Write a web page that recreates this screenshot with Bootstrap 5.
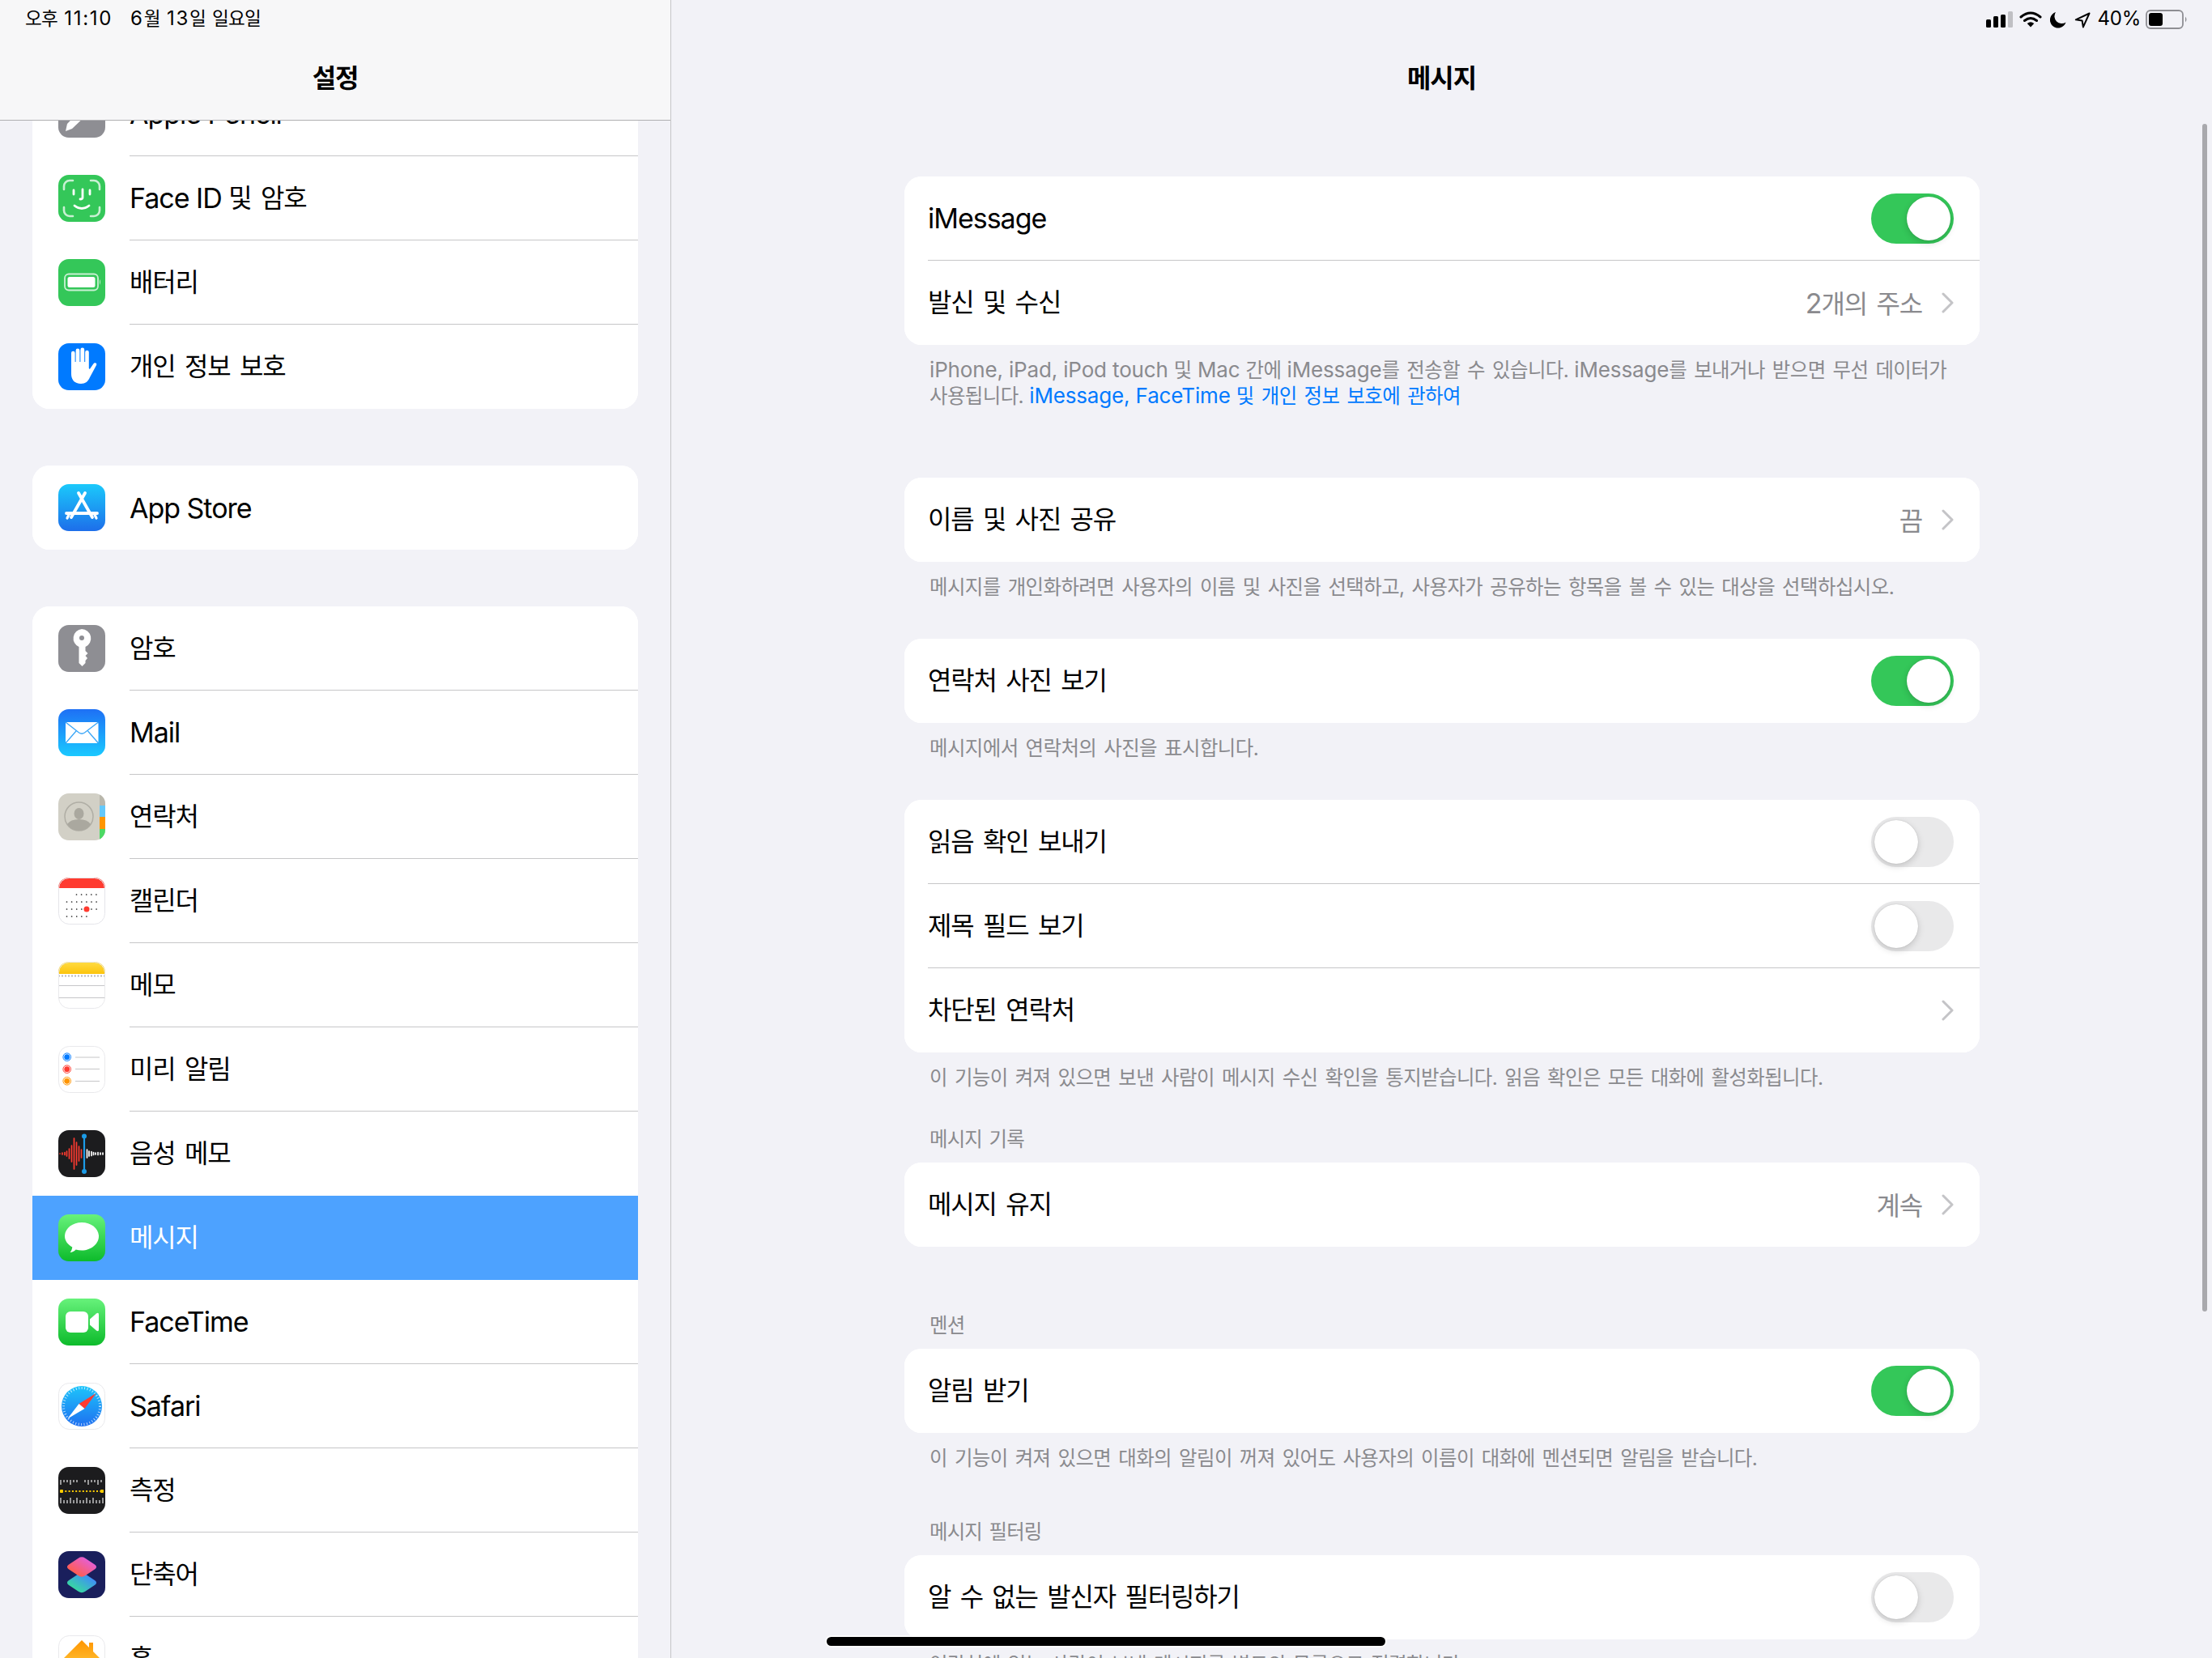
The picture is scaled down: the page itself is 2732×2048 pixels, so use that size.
<!DOCTYPE html>
<html lang="ko">
<head>
<meta charset="utf-8">
<title>설정 - 메시지</title>
<link href="https://cdn.jsdelivr.net/npm/bootstrap@5.3.0/dist/css/bootstrap.min.css" rel="stylesheet">
<style>
html,body{margin:0;height:2048px;overflow:hidden}
body{background:#f2f2f7;color:#000;font-family:Inter,"Noto Sans CJK KR",sans-serif;font-size:34px;position:relative;width:2732px;letter-spacing:-.03em}
.ko{font-size:.94em;letter-spacing:-.035em;word-spacing:.11em}
.shell{height:2048px}
.side{width:829px;flex:none;border-right:1px solid #c6c6c8;position:relative;overflow:hidden;padding:89px 40px 0 40px;height:2048px}
.side-head{position:absolute;left:0;right:0;top:0;height:149px;background:#f7f7f8;border-bottom:1px solid #b0b0b2;z-index:2}
.stat{height:46px;font-size:24px;padding-top:6px;line-height:34px;letter-spacing:0}
.stat-left{padding-left:31px;gap:22px;letter-spacing:.07em}
.nav-title{height:102px;font-weight:600;font-size:34px}
.set-group{border-radius:21px;background:#fff}
.set-item{border:0;padding:0;height:104px;background:#fff;color:#000;font-size:34px}
.set-gap{margin-top:70px}
.set-gap2{margin-top:70px}
.ico{width:58px;height:58px;margin:0 30px 0 32px;flex:none;display:block}
.lbl{border-bottom:1px solid #c6c6c8;height:104px;min-width:0}
.set-item:last-child .lbl,.no-line .lbl{border-bottom:0}
.set-item.sel{background:#4da2ff;color:#fff}
.pane{min-width:0;height:2048px;overflow:hidden}
.pane-body{width:1328px;margin:70px 0 0 288px}
.pane .set-item .lbl{margin-left:29px;padding-right:32px}
.val{color:#8a8a8e;margin-right:24px}
.chev{width:15px;height:26px;flex:none}
.tgl{width:102px;height:62px;border-radius:31px;background:#e9e9ea;position:relative;flex:none;display:block}
.tgl::after{content:"";position:absolute;top:4px;left:4px;width:54px;height:54px;border-radius:50%;background:#fff;box-shadow:0 3px 8px rgba(0,0,0,.16),0 0 1px rgba(0,0,0,.25)}
.tgl.on{background:#34c759}
.tgl.on::after{left:44px}
.cap{color:#8a8a8e;font-size:26px;line-height:32px;padding:0 30px 0 31px;margin-top:15px;letter-spacing:-.006em;word-break:keep-all}
.cap .ko{letter-spacing:-.023em}
.cap a{color:#007aff;text-decoration:none}
.sec-a{margin-top:85px}
.sec-b{margin-top:48px}
.hd{color:#8a8a8e;font-size:26px;line-height:32px;padding-left:31px;margin-bottom:13px}
.hd-a{margin-top:44px}
.hd-b{margin-top:81px}
.hd-c{margin-top:59px}
.stat-right{padding-right:28px}
.stat-svg{display:block;flex:none}
.s-sig{margin:8px 0 0}
.s-wifi{margin:8px 0 0 7px}
.s-moon{margin:9px 0 0 10px}
.s-arrow{margin:9px 0 0 10px}
.s-pct{margin-left:9px;letter-spacing:-.01em}
.s-batt{margin:6px 0 0 6px}
.sbar{position:absolute;left:2720px;top:153px;width:6px;height:1467px;border-radius:3px;background:#a9a9ad;z-index:3}
.hbar{position:absolute;left:1021px;top:2022px;width:690px;height:11px;border-radius:6px;background:#000;z-index:4;box-shadow:0 0 0 2px rgba(255,255,255,.75)}
</style>
</head>
<body>
<div class="d-flex shell">
  <aside class="side">
    <header class="side-head">
      <div class="stat stat-left d-flex"><span><span class="ko">오후</span> 11:10</span><span>6<span class="ko">월</span> 13<span class="ko">일 일요일</span></span></div>
      <div class="nav-title d-flex align-items-center justify-content-center"><span class="ko">설정</span></div>
    </header>

    <ul class="list-group set-group">
      <li class="list-group-item set-item d-flex align-items-center">
        <svg class="ico" viewBox="0 0 58 58"><rect width="58" height="58" rx="13" fill="#8e8e93"/><path d="M9 50l2-9 20-21 7 7-21 20z" fill="#fff"/></svg>
        <span class="lbl flex-grow-1 d-flex align-items-center">Apple Pencil</span>
      </li>
      <li class="list-group-item set-item d-flex align-items-center">
        <svg class="ico" viewBox="0 0 58 58"><rect width="58" height="58" rx="13" fill="#34c759"/><g fill="none" stroke="#c9f0d3" stroke-width="2.6" stroke-linecap="round"><path d="M7 18v-4a7 7 0 0 1 7-7h4M40 7h4a7 7 0 0 1 7 7v4M51 40v4a7 7 0 0 1-7 7h-4M18 51h-4a7 7 0 0 1-7-7v-4"/></g><g fill="none" stroke="#fff" stroke-width="2.8" stroke-linecap="round"><path d="M19 19v5M39 19v5M30 18v10q0 2-3 2M20 38q9 7 18 0"/></g></svg>
        <span class="lbl flex-grow-1 d-flex align-items-center">Face ID&nbsp;<span class="ko">및 암호</span></span>
      </li>
      <li class="list-group-item set-item d-flex align-items-center">
        <svg class="ico" viewBox="0 0 58 58"><rect width="58" height="58" rx="13" fill="#34c759"/><rect x="8" y="18.5" width="41" height="20" rx="5" fill="none" stroke="#c9f0d3" stroke-width="1.8"/><rect x="11.500" y="22" width="34" height="13" rx="2.500" fill="#fff"/><path d="M51 25q2 3 0 7z" fill="#c9f0d3"/></svg>
        <span class="lbl flex-grow-1 d-flex align-items-center"><span class="ko">배터리</span></span>
      </li>
      <li class="list-group-item set-item d-flex align-items-center">
        <svg class="ico" viewBox="0 0 58 58"><rect width="58" height="58" rx="13" fill="#007aff"/><path d="M16 12a2.300 2.300 0 0 1 4.600 0v11h1V9a2.400 2.400 0 0 1 4.800 0v14h1V8a2.400 2.400 0 0 1 4.800 0v15h1V11a2.300 2.300 0 0 1 4.600 0v20l1 1 4.500-6.500c1-1.500 3-1.500 3.700-.5.500.700.300 1.500-.2 2.500L39 42c-2 5-5.500 8-11 8-8 0-12-5-12-12z" fill="#fff"/></svg>
        <span class="lbl flex-grow-1 d-flex align-items-center"><span class="ko">개인 정보 보호</span></span>
      </li>
    </ul>

    <ul class="list-group set-group set-gap">
      <li class="list-group-item set-item d-flex align-items-center">
        <svg class="ico" viewBox="0 0 58 58"><defs><linearGradient id="ga" x1="0" y1="0" x2="0" y2="1"><stop offset="0" stop-color="#1bc9fb"/><stop offset="1" stop-color="#1d6eea"/></linearGradient></defs><rect width="58" height="58" rx="13" fill="url(#ga)"/><g stroke="#fff" stroke-width="3.800" stroke-linecap="round" fill="none"><path d="M33 11L16 41M25 11l17 30M10 36h38"/><path d="M11 42l2-4M47 42l-2-4" stroke-width="3.200"/></g></svg>
        <span class="lbl flex-grow-1 d-flex align-items-center">App Store</span>
      </li>
    </ul>

    <ul class="list-group set-group set-gap2">
      <li class="list-group-item set-item d-flex align-items-center">
        <svg class="ico" viewBox="0 0 58 58"><rect width="58" height="58" rx="13" fill="#8e8e93"/><path d="M29 5a11.500 11.500 0 0 1 4.500 22v5l3 3-3 3 2.500 3-2.500 3v3l-4 4-4-4V27A11.500 11.500 0 0 1 29 5z" fill="#fff"/><circle cx="29" cy="16" r="3" fill="#8e8e93"/></svg>
        <span class="lbl flex-grow-1 d-flex align-items-center"><span class="ko">암호</span></span>
      </li>
      <li class="list-group-item set-item d-flex align-items-center">
        <svg class="ico" viewBox="0 0 58 58"><defs><linearGradient id="gm" x1="0" y1="0" x2="0" y2="1"><stop offset="0" stop-color="#1e70f5"/><stop offset="1" stop-color="#1ac9ff"/></linearGradient></defs><rect width="58" height="58" rx="13" fill="url(#gm)"/><rect x="9" y="16" width="40.500" height="26" rx="2" fill="#fff"/><path d="M9 16l16.500 13q3.500 2.500 7 0L49.500 16M9 42l13-15M49.500 42l-13-15" fill="none" stroke="#3aa6f7" stroke-width="1.300"/></svg>
        <span class="lbl flex-grow-1 d-flex align-items-center">Mail</span>
      </li>
      <li class="list-group-item set-item d-flex align-items-center">
        <svg class="ico" viewBox="0 0 58 58"><defs><clipPath id="cc"><rect width="58" height="58" rx="13"/></clipPath></defs><g clip-path="url(#cc)"><rect width="58" height="58" fill="#d2d0c6"/><rect x="51" width="7" height="15" fill="#b9b7ac"/><rect x="51" y="15" width="7" height="14" fill="#64c8fa"/><rect x="51" y="29" width="7" height="15" fill="#ff9500"/><rect x="51" y="44" width="7" height="14" fill="#4cd964"/></g><circle cx="25.500" cy="28.500" r="17.500" fill="none" stroke="#b0aea5" stroke-width="1.500"/><ellipse cx="25.500" cy="25" rx="6" ry="7" fill="#aaa89f"/><path d="M11 38q4-6 14.500-6t14.500 6q-5 8-14.500 8T11 38z" fill="#aaa89f"/></svg>
        <span class="lbl flex-grow-1 d-flex align-items-center"><span class="ko">연락처</span></span>
      </li>
      <li class="list-group-item set-item d-flex align-items-center">
        <svg class="ico" viewBox="0 0 58 58"><defs><clipPath id="ck"><rect width="58" height="58" rx="13"/></clipPath></defs><g clip-path="url(#ck)"><rect width="58" height="58" fill="#fff"/><rect width="58" height="13" fill="#ff3b30"/></g><rect x=".5" y=".5" width="57" height="57" rx="13" fill="none" stroke="#e5e5ea"/><g fill="none" stroke="#222" stroke-width="1.700" stroke-linecap="round" stroke-dasharray="0 6.100"><path d="M22.500 21h25M10.500 30h37M10.500 39h37M10.500 48h25"/></g><circle cx="35" cy="39" r="3.500" fill="#ff3b30"/></svg>
        <span class="lbl flex-grow-1 d-flex align-items-center"><span class="ko">캘린더</span></span>
      </li>
      <li class="list-group-item set-item d-flex align-items-center">
        <svg class="ico" viewBox="0 0 58 58"><defs><linearGradient id="gn" x1="0" y1="0" x2="0" y2="1"><stop offset="0" stop-color="#ffdc45"/><stop offset="1" stop-color="#fcc40c"/></linearGradient><clipPath id="cn"><rect width="58" height="58" rx="13"/></clipPath></defs><g clip-path="url(#cn)"><rect width="58" height="58" fill="#fff"/><rect width="58" height="15" fill="url(#gn)"/><path d="M0 17.500h58" stroke="#b8b8bc" stroke-width="2" stroke-dasharray="2 2"/><path d="M0 29.500h58M0 44.500h58" stroke="#c6c6c8" stroke-width="1"/></g><rect x=".5" y=".5" width="57" height="57" rx="13" fill="none" stroke="#e9e9ec"/></svg>
        <span class="lbl flex-grow-1 d-flex align-items-center"><span class="ko">메모</span></span>
      </li>
      <li class="list-group-item set-item d-flex align-items-center">
        <svg class="ico" viewBox="0 0 58 58"><rect x=".5" y=".5" width="57" height="57" rx="13" fill="#fff" stroke="#e9e9ec"/><circle cx="10.700" cy="13.700" r="4.800" fill="none" stroke="#007aff"/><circle cx="10.700" cy="13.700" r="3.400" fill="#007aff"/><circle cx="10.700" cy="28.700" r="4.800" fill="none" stroke="#ff3b30"/><circle cx="10.700" cy="28.700" r="3.400" fill="#ff3b30"/><circle cx="10.700" cy="43.300" r="4.800" fill="none" stroke="#ff9500"/><circle cx="10.700" cy="43.300" r="3.400" fill="#ff9500"/><path d="M21 14h30M21 28.500h30M21 43.500h30" stroke="#c6c6c8" stroke-width="1"/></svg>
        <span class="lbl flex-grow-1 d-flex align-items-center"><span class="ko">미리 알림</span></span>
      </li>
      <li class="list-group-item set-item d-flex align-items-center no-line">
        <svg class="ico" viewBox="0 0 58 58"><rect width="58" height="58" rx="13" fill="#1c1c1e"/><g stroke="#ff3b30" stroke-width="1.700" stroke-linecap="round"><path d="M2 29h.1M5 28v2M8 27.500v3M10.500 26v6M13.500 23v12M16.500 19v20M19.500 10v38M22.500 15v28M25.500 20v18M28.500 24v10"/></g><path d="M32 8v43" stroke="#1c9be6" stroke-width="2.200"/><circle cx="32" cy="7.500" r="3" fill="#1c9be6"/><circle cx="32" cy="51" r="3" fill="#1c9be6"/><g stroke="#fff" stroke-width="1.700" stroke-linecap="round"><path d="M35.500 24v10M38 26v6M41 26.500v5M43.500 27.500v3M46 28v2M49 27.500v3M52 28v2M55 28v2"/></g></svg>
        <span class="lbl flex-grow-1 d-flex align-items-center"><span class="ko">음성 메모</span></span>
      </li>
      <li class="list-group-item set-item sel d-flex align-items-center no-line">
        <svg class="ico" viewBox="0 0 58 58"><defs><linearGradient id="gg" x1="0" y1="0" x2="0" y2="1"><stop offset="0" stop-color="#67f27b"/><stop offset="1" stop-color="#0dbb2b"/></linearGradient></defs><rect width="58" height="58" rx="13" fill="url(#gg)"/><path d="M29 10c11.600 0 21 7.400 21 17s-9.400 17.500-21 17.500c-2.600 0-5-.3-7.300-1-2 2-4.700 3.500-7.200 3.500 1.500-1.500 2.500-4 2.800-6.500C11.700 37.400 8 32.500 8 27c0-9.600 9.400-17 21-17z" fill="#fff"/></svg>
        <span class="lbl flex-grow-1 d-flex align-items-center"><span class="ko">메시지</span></span>
      </li>
      <li class="list-group-item set-item d-flex align-items-center">
        <svg class="ico" viewBox="0 0 58 58"><defs><linearGradient id="gf" x1="0" y1="0" x2="0" y2="1"><stop offset="0" stop-color="#67f27b"/><stop offset="1" stop-color="#0dbb2b"/></linearGradient></defs><rect width="58" height="58" rx="13" fill="url(#gf)"/><rect x="9" y="16" width="28" height="26" rx="6" fill="#fff"/><path d="M39 25.500l8-7q3-2 3 1.500v18q0 3.500-3 1.500l-8-7z" fill="#fff"/></svg>
        <span class="lbl flex-grow-1 d-flex align-items-center">FaceTime</span>
      </li>
      <li class="list-group-item set-item d-flex align-items-center">
        <svg class="ico" viewBox="0 0 58 58"><defs><linearGradient id="gs" x1="0" y1="0" x2="0" y2="1"><stop offset="0" stop-color="#1ec5fb"/><stop offset="1" stop-color="#1e6ff0"/></linearGradient></defs><rect x=".5" y=".5" width="57" height="57" rx="13" fill="#fff" stroke="#e9e9ec"/><circle cx="29" cy="29" r="25" fill="url(#gs)"/><circle cx="29" cy="29" r="22.500" fill="none" stroke="#fff" stroke-width="3" stroke-dasharray="1 2.500" opacity=".7"/><path d="M46.700 13L25.500 26l7 6z" fill="#ff3b30"/><path d="M11.300 44.500L32.500 32l-7-6z" fill="#fff"/></svg>
        <span class="lbl flex-grow-1 d-flex align-items-center">Safari</span>
      </li>
      <li class="list-group-item set-item d-flex align-items-center">
        <svg class="ico" viewBox="0 0 58 58"><rect width="58" height="58" rx="13" fill="#1c1c1e"/><path d="M3 16v6M7 16v3M11 16v3M15 16v6M19 16v3M23 16v3M33 16v3M37 16v6M41 16v3M45 16v3M49 16v6M53 16v3M3 38v7M7 41v4M11 41v4M15 38v7M19 41v4M23 38v7M27 41v4M31 41v4M35 38v7M39 41v4M43 38v7M47 41v4M51 41v4M55 38v7" stroke="#fff" stroke-width="1.100"/><path d="M4 30h50" stroke="#ffcc00" stroke-width="2" stroke-dasharray="2 2.300"/><rect x="2" y="28" width="4" height="4" rx="1" fill="#ffcc00"/><rect x="52" y="28" width="4" height="4" rx="1" fill="#ffcc00"/></svg>
        <span class="lbl flex-grow-1 d-flex align-items-center"><span class="ko">측정</span></span>
      </li>
      <li class="list-group-item set-item d-flex align-items-center">
        <svg class="ico" viewBox="0 0 58 58"><defs><linearGradient id="gt" x1="0" y1="0" x2="0" y2="1"><stop offset="0" stop-color="#e65fd0"/><stop offset="1" stop-color="#ff5d52"/></linearGradient><linearGradient id="gb" x1="0" y1="0" x2="0" y2="1"><stop offset="0" stop-color="#3f8ff5"/><stop offset="1" stop-color="#38d6a4"/></linearGradient></defs><rect width="58" height="58" rx="13" fill="#1a1f5c"/><rect x="14.500" y="24" width="29" height="29" rx="6" transform="translate(29 39) scale(1 .66) rotate(45) translate(-29 -38.500)" fill="url(#gb)"/><rect x="14.500" y="4" width="29" height="29" rx="6" transform="translate(29 19.500) scale(1 .66) rotate(45) translate(-29 -18.500)" fill="url(#gt)"/></svg>
        <span class="lbl flex-grow-1 d-flex align-items-center"><span class="ko">단축어</span></span>
      </li>
      <li class="list-group-item set-item d-flex align-items-center">
        <svg class="ico" viewBox="0 0 58 58"><defs><linearGradient id="gh" x1="0" y1="0" x2="0" y2="1"><stop offset="0" stop-color="#ff9500"/><stop offset="1" stop-color="#ffd24a"/></linearGradient></defs><rect x=".5" y=".5" width="57" height="57" rx="13" fill="#fff" stroke="#e9e9ec"/><path d="M29 6L7 28l2 2h5v20h30V30h5l2-2-8-8V9h-5v6z" fill="url(#gh)"/></svg>
        <span class="lbl flex-grow-1 d-flex align-items-center"><span class="ko">홈</span></span>
      </li>
    </ul>
  </aside>

  <main class="pane flex-grow-1">
    <div class="stat stat-right d-flex justify-content-end align-items-start">
      <svg class="stat-svg s-sig" width="34" height="22" viewBox="0 0 34 22"><rect x="0" y="10" width="6" height="10" rx="1.500"/><rect x="9" y="6" width="6" height="14" rx="1.500"/><rect x="18" y="4" width="6" height="16" rx="1.500"/><rect x="27" y="0" width="6" height="20" rx="1.500" fill="#c0c0c4"/></svg>
      <svg class="stat-svg s-wifi" width="28" height="20" viewBox="0 0 28 20"><g fill="none" stroke="#000" stroke-width="3" stroke-linecap="round"><path d="M2 7q12-10 24 0M6.500 11.500q7.500-6 15 0"/></g><path d="M9.700 15q4.300-3.500 8.600 0L14 19.500z"/></svg>
      <svg class="stat-svg s-moon" width="20" height="20" viewBox="0 0 20 20"><path d="M7 0A10 10 0 1 0 19.500 12.500 9 9 0 0 1 7 0z"/></svg>
      <svg class="stat-svg s-arrow" width="20" height="20" viewBox="0 0 20 20"><path d="M18.500 1.500L1.800 9.300l7.800 1.100 1.300 8z" fill="none" stroke="#000" stroke-width="2" stroke-linejoin="round"/></svg>
      <span class="s-pct">40%</span>
      <svg class="stat-svg s-batt" width="54" height="24" viewBox="0 0 54 24"><rect x="1" y="1" width="45" height="22" rx="5" fill="none" stroke="#8e8e93" stroke-width="1.800"/><rect x="4" y="4" width="17" height="16" rx="3"/><path d="M49 8.500q3 3.500 0 7z" fill="#8e8e93"/></svg>
    </div>
    <div class="nav-title d-flex align-items-center justify-content-center"><span class="ko">메시지</span></div>

    <div class="pane-body">
      <ul class="list-group set-group">
        <li class="list-group-item set-item d-flex align-items-center">
          <span class="lbl flex-grow-1 d-flex align-items-center justify-content-between">iMessage<span class="tgl on"></span></span>
        </li>
        <li class="list-group-item set-item d-flex align-items-center">
          <span class="lbl flex-grow-1 d-flex align-items-center"><span class="ko flex-grow-1">발신 및 수신</span><span class="val">2<span class="ko">개의 주소</span></span><svg class="chev" viewBox="0 0 15 26"><path d="M2 2l11 11L2 24" fill="none" stroke="#c4c4c7" stroke-width="3" stroke-linecap="round" stroke-linejoin="round"/></svg></span>
        </li>
      </ul>
      <p class="cap mb-0">iPhone, iPad, iPod touch <span class="ko">및</span> Mac <span class="ko">간에</span> iMessage<span class="ko">를 전송할 수 있습니다.</span> iMessage<span class="ko">를 보내거나 받으면 무선 데이터가 사용됩니다.</span> <a href="#">iMessage, FaceTime <span class="ko">및 개인 정보 보호에 관하여</span></a></p>

      <ul class="list-group set-group sec-a">
        <li class="list-group-item set-item d-flex align-items-center">
          <span class="lbl flex-grow-1 d-flex align-items-center"><span class="ko flex-grow-1">이름 및 사진 공유</span><span class="val"><span class="ko">끔</span></span><svg class="chev" viewBox="0 0 15 26"><path d="M2 2l11 11L2 24" fill="none" stroke="#c4c4c7" stroke-width="3" stroke-linecap="round" stroke-linejoin="round"/></svg></span>
        </li>
      </ul>
      <p class="cap mb-0"><span class="ko">메시지를 개인화하려면 사용자의 이름 및 사진을 선택하고, 사용자가 공유하는 항목을 볼 수 있는 대상을 선택하십시오.</span></p>

      <ul class="list-group set-group sec-b">
        <li class="list-group-item set-item d-flex align-items-center">
          <span class="lbl flex-grow-1 d-flex align-items-center justify-content-between"><span class="ko">연락처 사진 보기</span><span class="tgl on"></span></span>
        </li>
      </ul>
      <p class="cap mb-0"><span class="ko">메시지에서 연락처의 사진을 표시합니다.</span></p>

      <ul class="list-group set-group sec-b">
        <li class="list-group-item set-item d-flex align-items-center">
          <span class="lbl flex-grow-1 d-flex align-items-center justify-content-between"><span class="ko">읽음 확인 보내기</span><span class="tgl"></span></span>
        </li>
        <li class="list-group-item set-item d-flex align-items-center">
          <span class="lbl flex-grow-1 d-flex align-items-center justify-content-between"><span class="ko">제목 필드 보기</span><span class="tgl"></span></span>
        </li>
        <li class="list-group-item set-item d-flex align-items-center">
          <span class="lbl flex-grow-1 d-flex align-items-center justify-content-between"><span class="ko">차단된 연락처</span><svg class="chev" viewBox="0 0 15 26"><path d="M2 2l11 11L2 24" fill="none" stroke="#c4c4c7" stroke-width="3" stroke-linecap="round" stroke-linejoin="round"/></svg></span>
        </li>
      </ul>
      <p class="cap mb-0"><span class="ko">이 기능이 켜져 있으면 보낸 사람이 메시지 수신 확인을 통지받습니다. 읽음 확인은 모든 대화에 활성화됩니다.</span></p>

      <h2 class="hd hd-a fw-normal"><span class="ko">메시지 기록</span></h2>
      <ul class="list-group set-group">
        <li class="list-group-item set-item d-flex align-items-center">
          <span class="lbl flex-grow-1 d-flex align-items-center"><span class="ko flex-grow-1">메시지 유지</span><span class="val"><span class="ko">계속</span></span><svg class="chev" viewBox="0 0 15 26"><path d="M2 2l11 11L2 24" fill="none" stroke="#c4c4c7" stroke-width="3" stroke-linecap="round" stroke-linejoin="round"/></svg></span>
        </li>
      </ul>

      <h2 class="hd hd-b fw-normal"><span class="ko">멘션</span></h2>
      <ul class="list-group set-group">
        <li class="list-group-item set-item d-flex align-items-center">
          <span class="lbl flex-grow-1 d-flex align-items-center justify-content-between"><span class="ko">알림 받기</span><span class="tgl on"></span></span>
        </li>
      </ul>
      <p class="cap mb-0"><span class="ko">이 기능이 켜져 있으면 대화의 알림이 꺼져 있어도 사용자의 이름이 대화에 멘션되면 알림을 받습니다.</span></p>

      <h2 class="hd hd-c fw-normal"><span class="ko">메시지 필터링</span></h2>
      <ul class="list-group set-group">
        <li class="list-group-item set-item d-flex align-items-center">
          <span class="lbl flex-grow-1 d-flex align-items-center justify-content-between"><span class="ko">알 수 없는 발신자 필터링하기</span><span class="tgl"></span></span>
        </li>
      </ul>
      <p class="cap mb-0"><span class="ko">연락처에 없는 사람이 보낸 메시지를 별도의 목록으로 정렬합니다.</span></p>
    </div>
  </main>
</div>
<div class="sbar"></div>
<div class="hbar"></div>
<script src="https://cdn.jsdelivr.net/npm/bootstrap@5.3.0/dist/js/bootstrap.bundle.min.js"></script>
</body>
</html>
